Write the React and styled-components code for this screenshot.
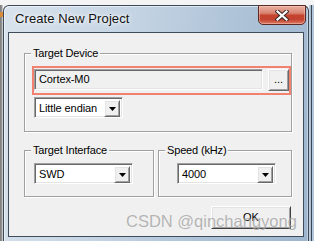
import React from 'react';
import styled, { createGlobalStyle } from 'styled-components';

const Global = createGlobalStyle`
  html, body { margin: 0; padding: 0; }
  body {
    width: 314px;
    height: 241px;
    overflow: hidden;
    background: #f2f2f2;
    font-family: "Liberation Sans", Arial, sans-serif;
  }
`;

const Desktop = styled.div`
  position: relative;
  width: 314px;
  height: 241px;
  overflow: hidden;
  box-sizing: border-box;
  padding: 5px 0 0 3px;
  background:
    linear-gradient(to bottom, #f4f4f4 0 5px, transparent 5px),
    linear-gradient(to bottom, transparent 12px, #d98b3c 12px, #d98b3c 17px, transparent 17px) 0 0 / 3px 100% no-repeat,
    linear-gradient(to right, #7a7a7a 0, #9a9a9a 2px, transparent 3px),
    linear-gradient(to right, transparent 309px, #c8d6e4 309px, #a2b8cf 311px, #3c4650 311px, #3c4650 312px, #b4c7da 312px);
`;

const Window = styled.div`
  width: 306px;
  height: 245px;
  box-sizing: border-box;
  border: 1px solid #3b4959;
  border-bottom: none;
  border-radius: 6px 6px 0 0;
  background: linear-gradient(100deg, #d8e2ec 0%, #c6d5e4 35%, #adc2d7 70%, #9db5ce 100%);
  box-shadow: inset 1px 1px 0 rgba(255, 255, 255, 0.55), inset -1px 0 0 rgba(255, 255, 255, 0.35);
  display: flex;
  flex-direction: column;
  padding: 0 4px 4px;
`;

const TitleBar = styled.div`
  height: 26px;
  display: flex;
  align-items: flex-start;
  justify-content: space-between;
  padding-left: 7px;
`;

const Title = styled.span`
  font-family: "Liberation Sans", Arial, sans-serif;
  font-size: 13px;
  line-height: 26px;
  color: #111;
  letter-spacing: 0.1px;
  text-shadow: 0 0 6px rgba(255, 255, 255, 0.95), 0 0 3px rgba(255, 255, 255, 0.9);
`;

const CloseButton = styled.div`
  width: 48px;
  height: 20px;
  margin-top: -1px;
  margin-right: -2px;
  box-sizing: border-box;
  border: 1px solid #5b2a24;
  border-radius: 0 0 5px 5px;
  background: linear-gradient(to bottom, #eab0a2 0%, #d9826f 40%, #c4432f 52%, #c24330 75%, #dc7a62 100%);
  box-shadow: inset 0 0 0 1px rgba(255, 210, 200, 0.45);
  display: flex;
  align-items: center;
  justify-content: center;
`;

const Client = styled.div`
  height: 205px;
  box-sizing: border-box;
  border: 1px solid #3f4c5b;
  background: #f0f0f0;
  padding: 14px 11px 0 15px;
  display: flex;
  flex-direction: column;
`;

const Group = styled.fieldset`
  margin: 0;
  min-width: 0;
  box-sizing: border-box;
  border: 1px solid #a0a0a0;
  box-shadow: inset 1px 1px 0 #ffffff, 1px 1px 0 #ffffff;
  padding: ${(p) => p.$pad || '6px 0 12px 0'};
  width: ${(p) => (p.$w ? `${p.$w}px` : 'auto')};
  display: flex;
  flex-direction: column;
  align-items: flex-start;
`;

const Legend = styled.legend`
  margin-left: 6px;
  padding: 0 2px;
  font-size: 11px;
  line-height: 13px;
  letter-spacing: -0.15px;
  color: #000;
  background: #f0f0f0;
`;

const Highlight = styled.div`
  align-self: stretch;
  margin-left: 7px;
  display: flex;
  align-items: flex-start;
  gap: 5px;
  border: 2px solid #f2826f;
  padding: 1px 0 2px 0;
`;

const sunken = `
  box-sizing: border-box;
  border-style: solid;
  border-width: 1px;
  border-color: #a0a0a0 #ffffff #ffffff #a0a0a0;
  box-shadow: inset 1px 1px 0 #696969, inset -1px -1px 0 #e3e3e3;
`;

const raised = `
  box-sizing: border-box;
  border-style: solid;
  border-width: 1px;
  border-color: #ffffff #696969 #696969 #ffffff;
  box-shadow: inset 1px 1px 0 #e3e3e3, inset -1px -1px 0 #a0a0a0;
  background: #f0f0f0;
`;

const Field = styled.div`
  ${sunken}
  flex: 1;
  height: 21px;
  background: #f0f0f0;
  padding-left: 4px;
  font-size: 11px;
  line-height: 19px;
  letter-spacing: -0.1px;
  color: #000;
`;

const DotsButton = styled.div`
  ${raised}
  width: 21px;
  height: 22px;
  font-size: 11px;
  line-height: 18px;
  text-align: center;
  color: #000;
`;

const Combo = styled.div`
  ${sunken}
  width: ${(p) => p.$w}px;
  height: 21px;
  margin-left: ${(p) => p.$ml || 0}px;
  margin-top: ${(p) => p.$mt || 0}px;
  background: #ffffff;
  display: flex;
  align-items: flex-start;
  padding: 2px;
`;

const ComboText = styled.span`
  flex: 1;
  padding-left: 2px;
  font-size: 11px;
  line-height: 16px;
  letter-spacing: -0.1px;
  color: #000;
  white-space: nowrap;
`;

const ArrowButton = styled.div`
  ${raised}
  width: 16px;
  height: 17px;
  display: flex;
  align-items: center;
  justify-content: center;
  padding-left: 1px;
`;

const Row = styled.div`
  display: flex;
  justify-content: space-between;
  margin-top: 12px;
`;

const Footer = styled.div`
  display: flex;
  justify-content: flex-end;
  margin-top: 9px;
`;

const OkButton = styled.div`
  ${raised}
  width: 80px;
  height: 23px;
  margin-right: 1px;
  border-color: #ffffff #404040 #404040 #ffffff;
  font-size: 11px;
  line-height: 21px;
  text-align: center;
  color: #000;
`;

const Watermark = styled.div`
  position: absolute;
  left: 126px;
  top: 212px;
  font-family: "Liberation Sans", Arial, sans-serif;
  font-size: 16.5px;
  line-height: 19px;
  color: rgba(110, 110, 110, 0.5);
  text-shadow: 0 0 1px rgba(255, 255, 255, 0.6);
  white-space: nowrap;
  pointer-events: none;
`;

const Arrow = () => (
  <svg width="7" height="4" viewBox="0 0 7 4">
    <polygon points="0,0 7,0 3.5,4" fill="#000" />
  </svg>
);

const CloseX = () => (
  <svg width="14" height="11" viewBox="0 0 14 11">
    <path d="M2.5 1.5 L11.5 9.5 M11.5 1.5 L2.5 9.5" stroke="#3a2a2a" strokeWidth="4.2" strokeLinecap="square" />
    <path d="M2.5 1.5 L11.5 9.5 M11.5 1.5 L2.5 9.5" stroke="#ffffff" strokeWidth="2.2" strokeLinecap="square" />
  </svg>
);

const ComboBox = ({ value, w, ml, mt }) => (
  <Combo $w={w} $ml={ml} $mt={mt}>
    <ComboText>{value}</ComboText>
    <ArrowButton>
      <Arrow />
    </ArrowButton>
  </Combo>
);

export default function App() {
  return (
    <>
      <Global />
      <Desktop>
        <Window>
          <TitleBar>
            <Title>Create New Project</Title>
            <CloseButton>
              <CloseX />
            </CloseButton>
          </TitleBar>
          <Client>
            <Group $pad="6px 0 13px 0">
              <Legend>Target Device</Legend>
              <Highlight>
                <Field>Cortex-M0</Field>
                <DotsButton>...</DotsButton>
              </Highlight>
              <ComboBox value="Little endian" w={89} ml={9} mt={2} />
            </Group>
            <Row>
              <Group $w={130}>
                <Legend>Target Interface</Legend>
                <ComboBox value="SWD" w={99} ml={9} />
              </Group>
              <Group $w={134}>
                <Legend>Speed (kHz)</Legend>
                <ComboBox value="4000" w={99} ml={18} />
              </Group>
            </Row>
            <Footer>
              <OkButton>OK</OkButton>
            </Footer>
          </Client>
        </Window>
        <Watermark>CSDN @qinchangyong</Watermark>
      </Desktop>
    </>
  );
}
